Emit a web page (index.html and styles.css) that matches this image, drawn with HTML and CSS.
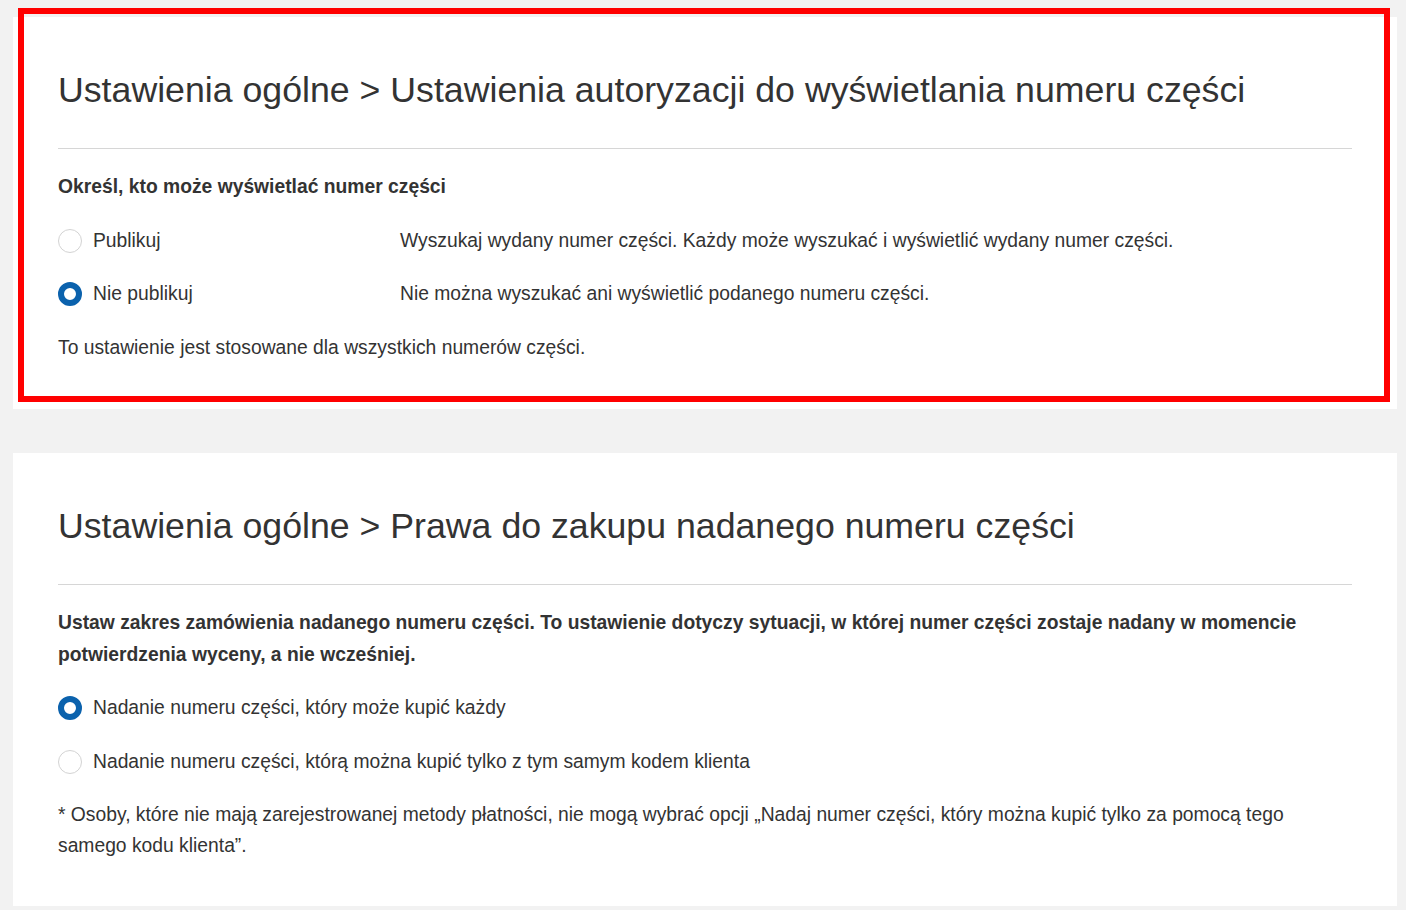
FILE: index.html
```html
<!DOCTYPE html>
<html lang="pl">
<head>
    <meta charset="UTF-8">
    <meta name="viewport" content="width=device-width, initial-scale=1.0">
    <title>Ustawienia ogólne</title>
    <link rel="stylesheet" href="styles.css">
</head>
<body>
<div class="page">
    <div class="card highlighted">
        <h1>Ustawienia ogólne &gt; Ustawienia autoryzacji do wyświetlania numeru części</h1>
        <div class="section">
            <p class="lead">Określ, kto może wyświetlać numer części</p>
            <label class="option">
                <span class="radio"></span>
                <span class="option-name fixed">Publikuj</span>
                <span class="option-desc">Wyszukaj wydany numer części. Każdy może wyszukać i wyświetlić wydany numer części.</span>
            </label>
            <label class="option">
                <span class="radio checked"></span>
                <span class="option-name fixed">Nie publikuj</span>
                <span class="option-desc">Nie można wyszukać ani wyświetlić podanego numeru części.</span>
            </label>
            <p class="note">To ustawienie jest stosowane dla wszystkich numerów części.</p>
        </div>
        <div class="highlight-frame"></div>
    </div>

    <div class="card">
        <h1>Ustawienia ogólne &gt; Prawa do zakupu nadanego numeru części</h1>
        <div class="section">
            <p class="lead">Ustaw zakres zamówienia nadanego numeru części. To ustawienie dotyczy sytuacji, w której numer części zostaje nadany w momencie potwierdzenia wyceny, a nie wcześniej.</p>
            <label class="option">
                <span class="radio checked"></span>
                <span class="option-name">Nadanie numeru części, który może kupić każdy</span>
            </label>
            <label class="option">
                <span class="radio"></span>
                <span class="option-name">Nadanie numeru części, którą można kupić tylko z tym samym kodem klienta</span>
            </label>
            <p class="note wrap">* Osoby, które nie mają zarejestrowanej metody płatności, nie mogą wybrać opcji „Nadaj numer części, który można kupić tylko za pomocą tego samego kodu klienta”.</p>
        </div>
    </div>
</div>
</body>
</html>
```

FILE: styles.css
```css
body { margin: 0; background: #f2f2f2; color: #333; font-family: "Liberation Sans", Arial, sans-serif; }
.page { padding: 17px 9px 4px 13px; display: flex; flex-direction: column; gap: 44px; }
.card { position: relative; background: #fff; padding: 53px 45px 45px; }
h1 {
    margin: 0;
    font-size: 35.7px;
    font-weight: normal;
    line-height: 40px;
    padding-bottom: 38px;
    border-bottom: 1px solid #d6d6d6;
}
.section { display: flex; flex-direction: column; gap: 21.5px; padding-top: 22px; }
.section p { margin: 0; }
.lead { font-size: 19.3px; font-weight: bold; line-height: 32px; padding-right: 20px; }
.option { display: flex; align-items: center; height: 32px; font-size: 19.3px; cursor: pointer; }
.radio {
    box-sizing: border-box;
    width: 24px;
    height: 24px;
    border-radius: 50%;
    border: 1.5px solid #d3d3d3;
    flex: none;
    margin-right: 11px;
}
.radio.checked { border: 6px solid #0b62ad; }
.option-name { white-space: nowrap; }
.option-name.fixed { width: 307px; flex: none; }
.option-desc { flex: 1; }
.note { font-size: 19.3px; line-height: 32px; }
.note.wrap { line-height: 31px; padding-right: 40px; }
/* red annotation frame drawn over the first card */
.highlight-frame {
    position: absolute;
    left: 5px;
    top: -9px;
    width: 1360px;
    height: 382px;
    border: 6px solid #ff0000;
    pointer-events: none;
}
```
